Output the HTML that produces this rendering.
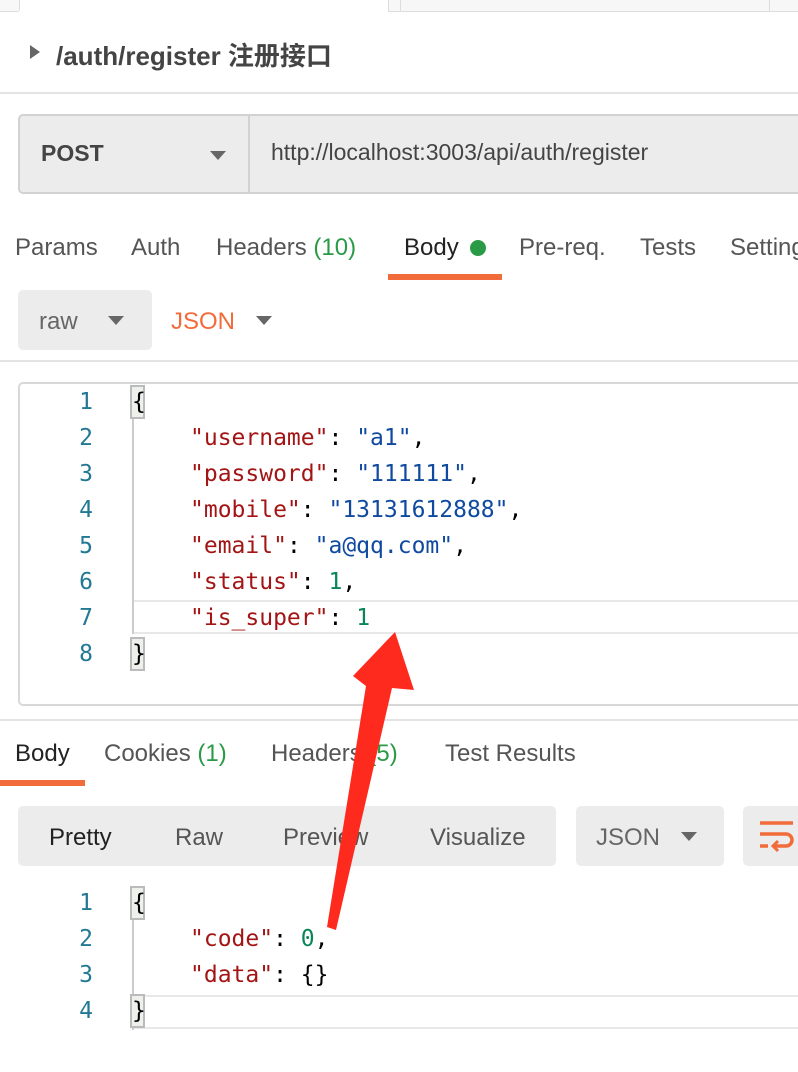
<!DOCTYPE html>
<html><head><meta charset="utf-8"><style>
*{margin:0;padding:0;box-sizing:border-box}
body{width:798px;height:1072px;background:#fff;position:relative;overflow:hidden;font-family:"Liberation Sans","Noto Sans CJK SC",sans-serif;color:#505050}
.a{position:absolute;white-space:nowrap}
.tab{font-size:24px;line-height:30px;color:#555}
.g{color:#2a9a47}
.code{font-family:"DejaVu Sans Mono","Liberation Mono",monospace;font-size:23px;line-height:36px}
.k{color:#a31515}.s{color:#0f4aa0}.n{color:#098658}.ln{color:#237893;width:40px;text-align:right}
.br{border:2px solid #bbb;background:#eef0ec;color:#000;display:inline-block;height:34px;line-height:30px;width:15px}
.tri{width:0;height:0;border-left:8px solid transparent;border-right:8px solid transparent;border-top:9px solid #666}
</style></head><body>
<div class="a" style="left:-2px;top:-2px;width:22px;height:14px;border:1px solid #ddd;border-radius:3px;background:#f8f8f8"></div>
<div class="a" style="left:388px;top:-2px;width:420px;height:14px;border:1px solid #ddd;background:#f7f7f7"></div>
<div class="a" style="left:400px;top:-2px;width:370px;height:13px;border-left:1px solid #ddd;border-right:1px solid #ddd"></div>
<div class="a" style="left:30px;top:45px;width:0;height:0;border-top:7px solid transparent;border-bottom:7px solid transparent;border-left:10px solid #666"></div>
<div class="a" style="left:56px;top:36px;font-size:26px;font-weight:bold;color:#444">/auth/register 注册接口</div>
<div class="a" style="left:0;top:92px;width:798px;height:2px;background:#e4e4e4"></div>
<div class="a" style="left:18px;top:114px;width:800px;height:80px;border:2px solid #d2d2d2;border-radius:5px;background:#ececec"></div>
<div class="a" style="left:248px;top:116px;width:2px;height:76px;background:#d2d2d2"></div>
<div class="a" style="left:41px;top:140px;font-size:23px;font-weight:bold;color:#444">POST</div>
<div class="a tri" style="left:210px;top:151px"></div>
<div class="a" style="left:271px;top:139px;font-size:23px;color:#444">http://localhost:3003/api/auth/register</div>
<div class="a tab" style="left:15px;top:233px">Params</div>
<div class="a tab" style="left:131px;top:233px">Auth</div>
<div class="a tab" style="left:216px;top:233px">Headers <span class="g">(10)</span></div>
<div class="a tab" style="left:404px;top:233px;color:#222">Body</div>
<div class="a" style="left:470px;top:240px;width:16px;height:16px;border-radius:50%;background:#2a9a47"></div>
<div class="a tab" style="left:519px;top:233px">Pre-req.</div>
<div class="a tab" style="left:640px;top:233px">Tests</div>
<div class="a tab" style="left:730px;top:233px">Settings</div>
<div class="a" style="left:388px;top:274px;width:114px;height:6px;background:#f26b3a"></div>
<div class="a" style="left:18px;top:290px;width:134px;height:60px;border-radius:5px;background:#ececec"></div>
<div class="a tab" style="left:39px;top:307px;color:#666">raw</div>
<div class="a tri" style="left:108px;top:316px"></div>
<div class="a tab" style="left:171px;top:307px;color:#f26b3a">JSON</div>
<div class="a tri" style="left:256px;top:316px"></div>
<div class="a" style="left:0;top:360px;width:798px;height:2px;background:#e4e4e4"></div>
<div class="a" style="left:18px;top:382px;width:800px;height:324px;border:2px solid #d8d8d8;border-radius:5px"></div>
<div class="a" style="left:132px;top:600px;width:680px;height:34px;border-top:2px solid #e8e8e8;border-bottom:2px solid #e8e8e8"></div>
<div class="a" style="left:132px;top:418px;width:2px;height:216px;background:#ccc"></div>
<div class="a code" style="left:53px;top:384px">
<div class="ln">1</div><div class="ln">2</div><div class="ln">3</div><div class="ln">4</div><div class="ln">5</div><div class="ln">6</div><div class="ln">7</div><div class="ln">8</div></div>
<div class="a code" style="left:130px;top:384px;color:#000">
<div><span class="br">{</span></div>
<div style="padding-left:60px"><span class="k">"username"</span>: <span class="s">"a1"</span>,</div>
<div style="padding-left:60px"><span class="k">"password"</span>: <span class="s">"111111"</span>,</div>
<div style="padding-left:60px"><span class="k">"mobile"</span>: <span class="s">"13131612888"</span>,</div>
<div style="padding-left:60px"><span class="k">"email"</span>: <span class="s">"a@qq.com"</span>,</div>
<div style="padding-left:60px"><span class="k">"status"</span>: <span class="n">1</span>,</div>
<div style="padding-left:60px"><span class="k">"is_super"</span>: <span class="n">1</span></div>
<div><span class="br">}</span></div></div>
<div class="a" style="left:0;top:719px;width:798px;height:2px;background:#e4e4e4"></div>
<div class="a tab" style="left:15px;top:739px;color:#222">Body</div>
<div class="a tab" style="left:104px;top:739px">Cookies <span class="g">(1)</span></div>
<div class="a tab" style="left:271px;top:739px">Headers <span class="g">(5)</span></div>
<div class="a tab" style="left:445px;top:739px">Test Results</div>
<div class="a" style="left:0;top:780px;width:85px;height:6px;background:#f26b3a"></div>
<div class="a" style="left:18px;top:806px;width:538px;height:60px;border-radius:5px;background:#ececec"></div>
<div class="a tab" style="left:49px;top:823px;color:#222">Pretty</div>
<div class="a tab" style="left:175px;top:823px">Raw</div>
<div class="a tab" style="left:283px;top:823px">Preview</div>
<div class="a tab" style="left:430px;top:823px">Visualize</div>
<div class="a" style="left:576px;top:806px;width:148px;height:60px;border-radius:5px;background:#ececec"></div>
<div class="a tab" style="left:596px;top:823px;color:#666">JSON</div>
<div class="a tri" style="left:681px;top:832px"></div>
<div class="a" style="left:743px;top:806px;width:70px;height:60px;border-radius:5px;background:#ececec"></div>
<svg class="a" style="left:756px;top:820px" width="42" height="34"><path d="M4 3H37M4 14H30a6 6 0 0 1 0 12H18M4 26H12" stroke="#f26b3a" stroke-width="3.5" fill="none"/><path d="M22 21l-5 5 5 5" stroke="#f26b3a" stroke-width="3" fill="none"/></svg>
<div class="a" style="left:132px;top:995px;width:680px;height:34px;border-top:2px solid #e8e8e8;border-bottom:2px solid #e8e8e8"></div>
<div class="a" style="left:132px;top:920px;width:2px;height:110px;background:#ccc"></div>
<div class="a code" style="left:53px;top:885px">
<div class="ln">1</div><div class="ln">2</div><div class="ln">3</div><div class="ln">4</div></div>
<div class="a code" style="left:130px;top:885px;color:#000">
<div><span class="br">{</span></div>
<div style="padding-left:60px"><span class="k">"code"</span>: <span class="n">0</span>,</div>
<div style="padding-left:60px"><span class="k">"data"</span>: {}</div>
<div><span class="br">}</span></div></div>
<svg class="a" style="left:0;top:0" width="798" height="1072"><polygon points="327,927 336,930 392,688 414,690 395,632 353,676 366,686" fill="#ff2a1e"/></svg>
</body></html>
